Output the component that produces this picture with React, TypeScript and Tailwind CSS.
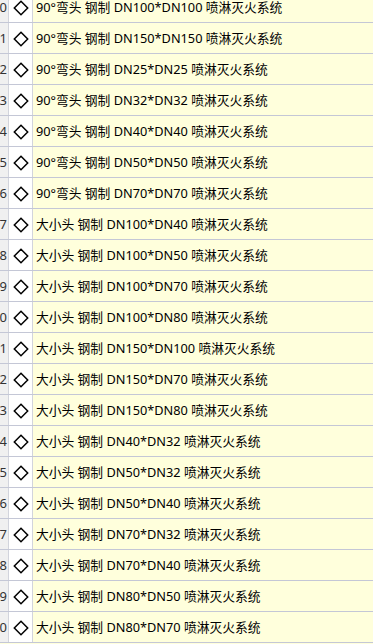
import React from "react";

const items = [
  "90°弯头 钢制 DN100*DN100 喷淋灭火系统",
  "90°弯头 钢制 DN150*DN150 喷淋灭火系统",
  "90°弯头 钢制 DN25*DN25 喷淋灭火系统",
  "90°弯头 钢制 DN32*DN32 喷淋灭火系统",
  "90°弯头 钢制 DN40*DN40 喷淋灭火系统",
  "90°弯头 钢制 DN50*DN50 喷淋灭火系统",
  "90°弯头 钢制 DN70*DN70 喷淋灭火系统",
  "大小头 钢制 DN100*DN40 喷淋灭火系统",
  "大小头 钢制 DN100*DN50 喷淋灭火系统",
  "大小头 钢制 DN100*DN70 喷淋灭火系统",
  "大小头 钢制 DN100*DN80 喷淋灭火系统",
  "大小头 钢制 DN150*DN100 喷淋灭火系统",
  "大小头 钢制 DN150*DN70 喷淋灭火系统",
  "大小头 钢制 DN150*DN80 喷淋灭火系统",
  "大小头 钢制 DN40*DN32 喷淋灭火系统",
  "大小头 钢制 DN50*DN32 喷淋灭火系统",
  "大小头 钢制 DN50*DN40 喷淋灭火系统",
  "大小头 钢制 DN70*DN32 喷淋灭火系统",
  "大小头 钢制 DN70*DN40 喷淋灭火系统",
  "大小头 钢制 DN80*DN50 喷淋灭火系统",
  "大小头 钢制 DN80*DN70 喷淋灭火系统",
];

const Diamond = () => (
  <svg width="16" height="16" viewBox="0 0 16 16" className="block">
    <path d="M8 1.3 L14.7 8 L8 14.7 L1.3 8 Z" fill="none" stroke="#000" strokeWidth="1.5" />
  </svg>
);

export default function App() {
  return (
    <div
      className="w-[373px] h-[644px] overflow-hidden bg-[#ffffdc]"
      style={{ fontFamily: '"Noto Sans", "Noto Sans CJK SC", sans-serif' }}
    >
      <div className="-mt-[8px]">
        {items.map((text, i) => (
          <div key={i} className="flex h-[31px] border-b border-[#c4c7d6]">
            <div className="w-[9px] shrink-0 overflow-hidden bg-[#f0f0f0] border-r border-[#d2d4dc] flex items-center justify-end pt-[1px] text-[13px] text-[#333]">
              <span className="pr-[1px]">{(30 + i) % 10}</span>
            </div>
            <div className="w-[24px] shrink-0 bg-white border-r border-[#d2d4dc] flex items-center justify-center pt-[1px]">
              <Diamond />
            </div>
            <div className="flex-1 flex items-center pl-[3px] pt-[2px] text-[12.75px] text-black whitespace-nowrap">
              {text}
            </div>
          </div>
        ))}
      </div>
    </div>
  );
}
